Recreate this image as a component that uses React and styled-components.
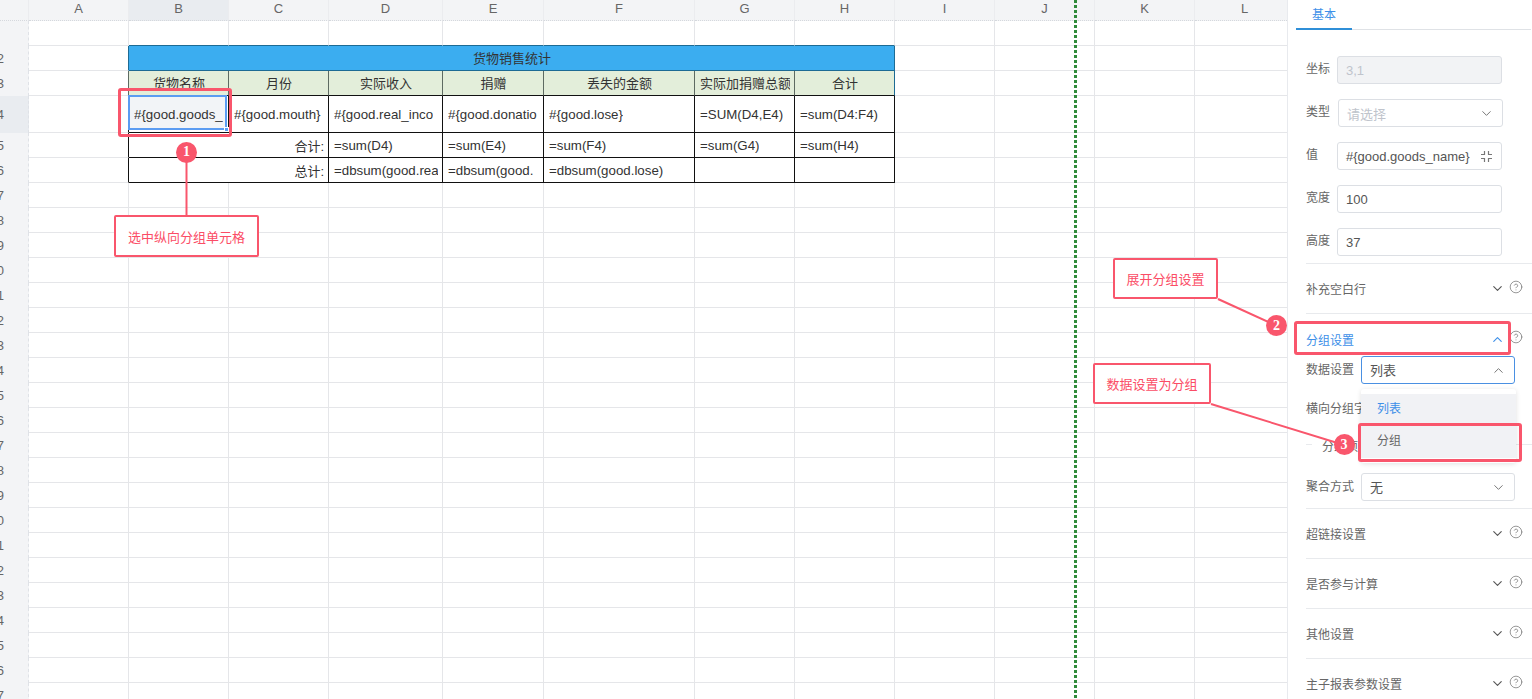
import React from "react";
import styled, { createGlobalStyle } from "styled-components";
import { ChevronDown, ChevronUp, CircleHelp } from "lucide-react";

const FONT = `"Liberation Sans", "Noto Sans CJK SC", sans-serif`;
const LINE = "#e5e6e9";
const PINK = "#f9566c";
const TEAL = "#1d6b94";
const SAGE = "#5e6b62";
const INK = "#111";

const GlobalStyle = createGlobalStyle`
  html, body {
    margin: 0;
    height: 100%;
    overflow: hidden;
    background: #fff;
    font-family: ${FONT};
  }
`;

const Page = styled.div`
  position: relative;
  display: flex;
  width: 1532px;
  height: 699px;
  overflow: hidden;
`;

/* spreadsheet */
const Sheet = styled.div`
  position: relative;
  flex: 0 0 1287px;
  height: 699px;
  overflow: hidden;
`;

const Grid = styled.div`
  display: grid;
  grid-template-columns: 29px 100px 100px 100px 114px 101px 151px repeat(6, 100px);
  grid-template-rows: 21px 25px 25px 25px 37px repeat(23, 25px);
`;

const ColHead = styled.div`
  display: flex;
  align-items: center;
  justify-content: center;
  padding-bottom: 3px;
  box-sizing: border-box;
  background: ${(p) => (p.$active ? "#e9ecf0" : "#f3f4f6")};
  border-right: 1px solid #ebecef;
  border-bottom: 1px dotted #d5d8dd;
  color: #666;
  font-size: 13px;
`;

const RowHead = styled.div`
  display: flex;
  align-items: center;
  justify-content: flex-end;
  box-sizing: border-box;
  padding-right: 24px;
  overflow: hidden;
  background: ${(p) => (p.$active ? "#e9ecf0" : "#f3f4f6")};
  border-right: 1px dashed #dfe2e7;
  color: #666;
  font-size: 13px;
`;

const Cell = styled.div`
  position: relative;
  grid-column: span ${(p) => p.$span || 1};
  display: flex;
  align-items: center;
  justify-content: ${(p) => p.$align || "flex-start"};
  box-sizing: border-box;
  min-width: 0;
  padding: 0 4px ${(p) => (p.$head ? 2 : 0)}px 5px;
  background: ${(p) => p.$bg || "#fff"};
  border-right: 1px solid ${(p) => p.$right || LINE};
  border-bottom: 1px solid ${(p) => p.$bottom || LINE};
  color: #333;
  font-size: 13px;
`;

const CellText = styled.span`
  position: relative;
  overflow: hidden;
  white-space: nowrap;
  font-size: ${(p) => (p.$formula ? 13.3 : 13)}px;
`;

const Selection = styled.div`
  position: absolute;
  left: -1px;
  top: -1px;
  width: 95px;
  height: 31px;
  border: 2px solid #5b9cf2;
  background: #f2f4f7;
  &::after {
    content: "";
    position: absolute;
    right: -4px;
    bottom: -4px;
    width: 3px;
    height: 3px;
    background: #5b9cf2;
    border: 1px solid #fff;
  }
`;

const FreezeLine = styled.div`
  position: absolute;
  left: 1074px;
  top: 0;
  width: 3px;
  height: 699px;
  background: repeating-linear-gradient(to bottom, #2f8a3a 0 3px, transparent 3px 5px);
`;

/* side panel */
const Panel = styled.aside`
  flex: 1;
  box-sizing: border-box;
  height: 699px;
  overflow: hidden;
  border-left: 1px solid #e8eaee;
  color: #666;
  font-size: 12px;
`;

const Tabs = styled.div`
  display: flex;
  height: 30px;
  box-sizing: border-box;
  margin: 0 1px 26px 8px;
  border-bottom: 1px solid #dfe2e6;
`;

const Tab = styled.div`
  width: 56px;
  height: 30px;
  box-sizing: border-box;
  padding: 5px 0 0 16px;
  border-bottom: 2px solid #2f8fd8;
  color: #3d8fe8;
  font-size: 12px;
`;

const Form = styled.div`
  padding-left: 18px;
`;

const Row = styled.div`
  display: flex;
  align-items: center;
  height: 28px;
  margin-bottom: ${(p) => p.$gap ?? 15}px;
`;

const Label = styled.div`
  flex: 0 0 ${(p) => p.$width || 31}px;
  margin-top: ${(p) => (p.$width ? -1 : -2)}px;
  white-space: nowrap;
  line-height: 16px;
`;

const Field = styled.div`
  position: relative;
  display: flex;
  align-items: center;
  justify-content: space-between;
  box-sizing: border-box;
  width: ${(p) => p.$width || 165}px;
  height: 28px;
  padding: 0 8px;
  background: ${(p) => (p.$disabled ? "#f2f3f5" : "#fff")};
  border: 1px solid ${(p) => (p.$focus ? "#4a90e2" : "#dcdfe4")};
  border-radius: 3px;
  color: ${(p) => (p.$muted ? "#c0c4cc" : "#555")};
  font-size: 13px;
  white-space: nowrap;
`;

const TypeField = styled(Field)`
  margin-left: 1px;
`;

const FieldText = styled.span`
  margin-top: -2px;
`;

const Sections = styled.div`
  margin-left: 18px;
  border-top: 1px solid #e8eaed;
`;

const Section = styled.div`
  border-bottom: ${(p) => (p.$open ? "none" : "1px solid #e8eaed")};
`;

const SectionHead = styled.div`
  display: flex;
  align-items: center;
  box-sizing: border-box;
  height: ${(p) => (p.$open ? 42 : 49)}px;
  padding-top: ${(p) => (p.$open ? 8 : 0)}px;
  color: ${(p) => (p.$open ? "#3d8fe8" : "#666")};
`;

const SectionTitle = styled.div`
  flex: 1;
`;

const HeadIcons = styled.div`
  display: flex;
  align-items: center;
  gap: 4px;
  width: 42px;
  color: #555;
  svg + svg {
    margin-top: -4px;
    color: #777;
  }
`;

const OpenBody = styled.div`
  padding-bottom: 7px;
  border-bottom: 1px solid #e8eaed;
`;

const Legend = styled.div`
  display: flex;
  align-items: center;
  height: 28px;
  margin-bottom: 15px;
  &::before,
  &::after {
    content: "";
    height: 1px;
    background: #e8eaed;
  }
  &::before {
    flex: 0 0 6px;
  }
  &::after {
    flex: 1;
  }
`;

const LegendText = styled.span`
  margin-top: 2px;
  padding: 0 10px;
`;

const Menu = styled.div`
  position: absolute;
  left: -1px;
  top: 32px;
  z-index: 2;
  width: 155px;
  box-sizing: border-box;
  padding: 5px 0;
  background: #fff;
  box-shadow: 0 1px 5px rgba(0, 0, 0, 0.12);
  border-radius: 3px;
`;

const MenuItem = styled.div`
  height: 32px;
  line-height: 31px;
  padding-left: 16px;
  background: #f1f2f5;
  color: ${(p) => (p.$active ? "#3d8fe8" : "#666")};
  font-size: 12px;
`;

/* annotations drawn on top of the screenshot */
const Overlay = styled.div`
  position: absolute;
  inset: 0;
  z-index: 10;
  pointer-events: none;
`;

const Connectors = styled.svg`
  position: absolute;
  inset: 0;
`;

const Frame = styled.div`
  position: absolute;
  left: ${(p) => p.$x}px;
  top: ${(p) => p.$y}px;
  width: ${(p) => p.$w}px;
  height: ${(p) => p.$h}px;
  box-sizing: border-box;
  border: 3px solid ${PINK};
  border-radius: 3px;
`;

const Callout = styled.div`
  position: absolute;
  left: ${(p) => p.$x}px;
  top: ${(p) => p.$y}px;
  width: ${(p) => p.$w}px;
  height: ${(p) => p.$h}px;
  display: flex;
  align-items: center;
  justify-content: center;
  box-sizing: border-box;
  background: #fff;
  border: 2px solid ${PINK};
  border-radius: 2px;
  color: #fb4d66;
  font-size: 13px;
`;

const Badge = styled.div`
  position: absolute;
  left: ${(p) => p.$x - 10.5}px;
  top: ${(p) => p.$y - 10.5}px;
  width: 21px;
  height: 21px;
  display: flex;
  align-items: center;
  justify-content: center;
  background: ${PINK};
  border-radius: 50%;
  color: #fff;
  font: bold 14px "Liberation Serif", serif;
`;

const COLS = ["A", "B", "C", "D", "E", "F", "G", "H", "I", "J", "K", "L"];

const ROW_COUNT = 27;

const HEADERS = ["货物名称", "月份", "实际收入", "捐赠", "丢失的金额", "实际加捐赠总额", "合计"];

const TABLE = {
  4: ["#{good.goods_", "#{good.mouth}", "#{good.real_inco", "#{good.donatio", "#{good.lose}", "=SUM(D4,E4)", "=sum(D4:F4)"],
  5: ["=sum(D4)", "=sum(E4)", "=sum(F4)", "=sum(G4)", "=sum(H4)"],
  6: ["=dbsum(good.rea", "=dbsum(good.", "=dbsum(good.lose)", "", ""],
};

const blankCells = (row, from) =>
  COLS.slice(from).map((c) => <Cell key={c + row} />);

const edgeOf = (row) => (row === 2 ? TEAL : row === 3 ? SAGE : INK);

const tableCells = (row) => {
  if (row === 2) {
    return (
      <Cell key="title" $span={7} $head $align="center" $bg="#3badf0" $right={TEAL} $bottom={TEAL}>
        <CellText>货物销售统计</CellText>
      </Cell>
    );
  }
  if (row === 3) {
    return HEADERS.map((h, i) => (
      <Cell key={h} $head $align="center" $bg="#e3eeda" $right={i === 6 ? TEAL : SAGE} $bottom={INK}>
        <CellText>{h}</CellText>
      </Cell>
    ));
  }
  if (row === 4) {
    return TABLE[4].map((v, i) => (
      <Cell key={v} $right={INK} $bottom={INK}>
        {i === 0 && <Selection />}
        <CellText $formula>{v}</CellText>
      </Cell>
    ));
  }
  return [
    <Cell key="sum" $span={2} $align="flex-end" $right={INK} $bottom={INK}>
      <CellText>{row === 5 ? "合计:" : "总计:"}</CellText>
    </Cell>,
    ...TABLE[row].map((v, i) => (
      <Cell key={i} $right={INK} $bottom={INK}>
        <CellText $formula>{v}</CellText>
      </Cell>
    )),
  ];
};

const SheetRow = ({ row }) => {
  const inTable = row >= 2 && row <= 6;
  return (
    <>
      <RowHead $active={row === 4}>{row === 1 ? "" : row}</RowHead>
      {inTable ? (
        <>
          <Cell $right={edgeOf(row)} />
          {tableCells(row)}
          {blankCells(row, 8)}
        </>
      ) : row === 1 ? (
        <>
          <Cell />
          {COLS.slice(1, 8).map((c) => (
            <Cell key={c} $bottom={TEAL} />
          ))}
          {blankCells(row, 8)}
        </>
      ) : (
        blankCells(row, 0)
      )}
    </>
  );
};

// the four inward corner marks next to the value field
const ShrinkIcon = () => (
  <svg width="13" height="13" viewBox="0 0 13 13" fill="none" stroke="#777" strokeWidth="1.2">
    <path d="M1 4.5h3.5V1M8.5 1v3.5H12M12 8.5H8.5V12M4.5 12V8.5H1" />
  </svg>
);

const SectionRow = ({ title }) => (
  <Section>
    <SectionHead>
      <SectionTitle>{title}</SectionTitle>
      <HeadIcons>
        <ChevronDown size={15} strokeWidth={1.8} />
        <CircleHelp size={14} strokeWidth={1.3} />
      </HeadIcons>
    </SectionHead>
  </Section>
);

const App = () => (
  <Page>
    <GlobalStyle />
    <Sheet>
      <Grid>
        <ColHead />
        {COLS.map((c) => (
          <ColHead key={c} $active={c === "B"}>
            {c}
          </ColHead>
        ))}
        {Array.from({ length: ROW_COUNT }, (_, i) => (
          <SheetRow key={i} row={i + 1} />
        ))}
      </Grid>
      <FreezeLine />
    </Sheet>

    <Panel>
      <Tabs>
        <Tab>基本</Tab>
      </Tabs>
      <Form>
        <Row>
          <Label>坐标</Label>
          <Field $disabled $muted>3,1</Field>
        </Row>
        <Row>
          <Label>类型</Label>
          <TypeField $muted>
            请选择
            <ChevronDown size={15} strokeWidth={1.6} color="#777" />
          </TypeField>
        </Row>
        <Row>
          <Label>值</Label>
          <Field>
            #{"{"}good.goods_name{"}"}
            <ShrinkIcon />
          </Field>
        </Row>
        <Row>
          <Label>宽度</Label>
          <Field>100</Field>
        </Row>
        <Row $gap={7}>
          <Label>高度</Label>
          <Field>37</Field>
        </Row>
      </Form>

      <Sections>
        <SectionRow title="补充空白行" />
        <Section $open>
          <SectionHead $open>
            <SectionTitle>分组设置</SectionTitle>
            <HeadIcons>
              <ChevronUp size={15} strokeWidth={1.8} color="#3d8fe8" />
              <CircleHelp size={14} strokeWidth={1.3} />
            </HeadIcons>
          </SectionHead>
          <OpenBody>
            <Row $gap={11}>
              <Label $width={55}>数据设置</Label>
              <Field $width={154} $focus>
                <FieldText>列表</FieldText>
                <ChevronUp size={15} strokeWidth={1.6} color="#777" />
                <Menu>
                  <MenuItem $active>列表</MenuItem>
                  <MenuItem>分组</MenuItem>
                </Menu>
              </Field>
            </Row>
            <Row $gap={7}>
              <Label $width={55}>横向分组字段</Label>
            </Row>
            <Legend>
              <LegendText>分组项设置</LegendText>
            </Legend>
            <Row $gap={0}>
              <Label $width={55}>聚合方式</Label>
              <Field $width={154}>
                <FieldText>无</FieldText>
                <ChevronDown size={15} strokeWidth={1.6} color="#777" />
              </Field>
            </Row>
          </OpenBody>
        </Section>
        <SectionRow title="超链接设置" />
        <SectionRow title="是否参与计算" />
        <SectionRow title="其他设置" />
        <SectionRow title="主子报表参数设置" />
      </Sections>
    </Panel>

    <Overlay>
      <Connectors width="1532" height="699" stroke={PINK} strokeWidth="2" fill="none">
        <path d="M186.5 152V215" />
        <path d="M1218 299L1277 326" />
        <path d="M1211 404L1344 445" />
      </Connectors>
      <Frame $x={118} $y={88} $w={114} $h={49} />
      <Frame $x={1294} $y={321} $w={217} $h={34} />
      <Frame $x={1358} $y={423} $w={164} $h={39} />
      <Callout $x={114} $y={215} $w={145} $h={42}>选中纵向分组单元格</Callout>
      <Callout $x={1113} $y={258} $w={105} $h={41}>展开分组设置</Callout>
      <Callout $x={1093} $y={363} $w={118} $h={41}>数据设置为分组</Callout>
      <Badge $x={186.5} $y={152}>1</Badge>
      <Badge $x={1276.5} $y={325.5}>2</Badge>
      <Badge $x={1344} $y={444.5}>3</Badge>
    </Overlay>
  </Page>
);

export default App;
